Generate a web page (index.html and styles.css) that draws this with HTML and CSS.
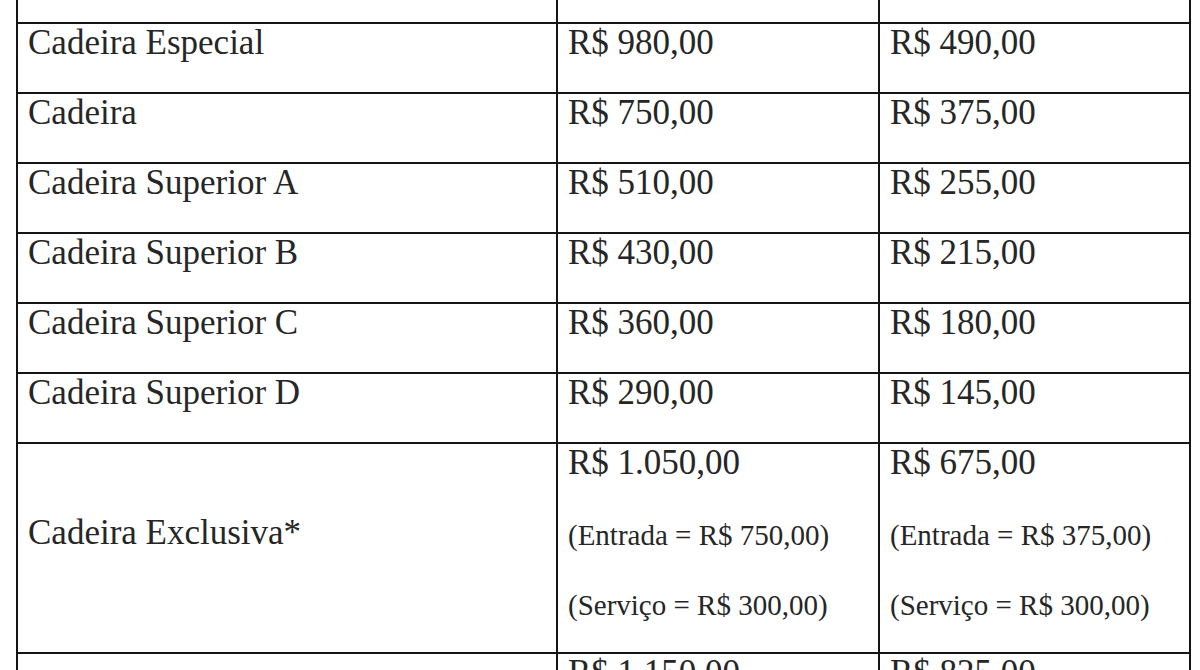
FILE: index.html
```html
<!DOCTYPE html>
<html lang="pt-BR">
<head>
<meta charset="utf-8">
<title>Preços</title>
<link rel="stylesheet" href="styles.css">
</head>
<body>
<table class="prices">
  <colgroup>
    <col class="c-name">
    <col class="c-full">
    <col class="c-half">
  </colgroup>
  <tbody>
    <tr class="row-top"><td></td><td></td><td></td></tr>
    <tr><td>Cadeira Especial</td><td>R$ 980,00</td><td>R$ 490,00</td></tr>
    <tr><td>Cadeira</td><td>R$ 750,00</td><td>R$ 375,00</td></tr>
    <tr><td>Cadeira Superior A</td><td>R$ 510,00</td><td>R$ 255,00</td></tr>
    <tr><td>Cadeira Superior B</td><td>R$ 430,00</td><td>R$ 215,00</td></tr>
    <tr><td>Cadeira Superior C</td><td>R$ 360,00</td><td>R$ 180,00</td></tr>
    <tr><td>Cadeira Superior D</td><td>R$ 290,00</td><td>R$ 145,00</td></tr>
    <tr>
      <td>Cadeira Exclusiva*</td>
      <td>
        <p class="main">R$ 1.050,00</p>
        <p class="sub">(Entrada = R$ 750,00)</p>
        <p class="sub">(Serviço = R$ 300,00)</p>
      </td>
      <td>
        <p class="main">R$ 675,00</p>
        <p class="sub">(Entrada = R$ 375,00)</p>
        <p class="sub">(Serviço = R$ 300,00)</p>
      </td>
    </tr>
    <tr><td></td><td>R$ 1.150,00</td><td>R$ 825,00</td></tr>
  </tbody>
</table>
</body>
</html>
```

FILE: styles.css
```css
html, body {
  margin: 0;
  padding: 0;
  background: #ffffff;
  overflow: hidden;
}

.prices {
  border-collapse: collapse;
  table-layout: fixed;
  width: 1173px;
  margin: -48px 0 0 16px;
  font-family: "Liberation Serif", "Times New Roman", serif;
  font-size: 35px;
  line-height: 38px;
  color: #262626;
}

.c-name { width: 540px; }
.c-full { width: 322px; }
.c-half { width: 311px; }

.prices td {
  border: 2px solid #151515;
  padding: 0 10px 30px 10px;
  vertical-align: middle;
  white-space: nowrap;
}

.prices p {
  margin: 0;
}

.prices .sub {
  font-size: 29px;
  line-height: 33px;
  margin-top: 37px;
}

.row-top td {
  height: 38px;
}
```
